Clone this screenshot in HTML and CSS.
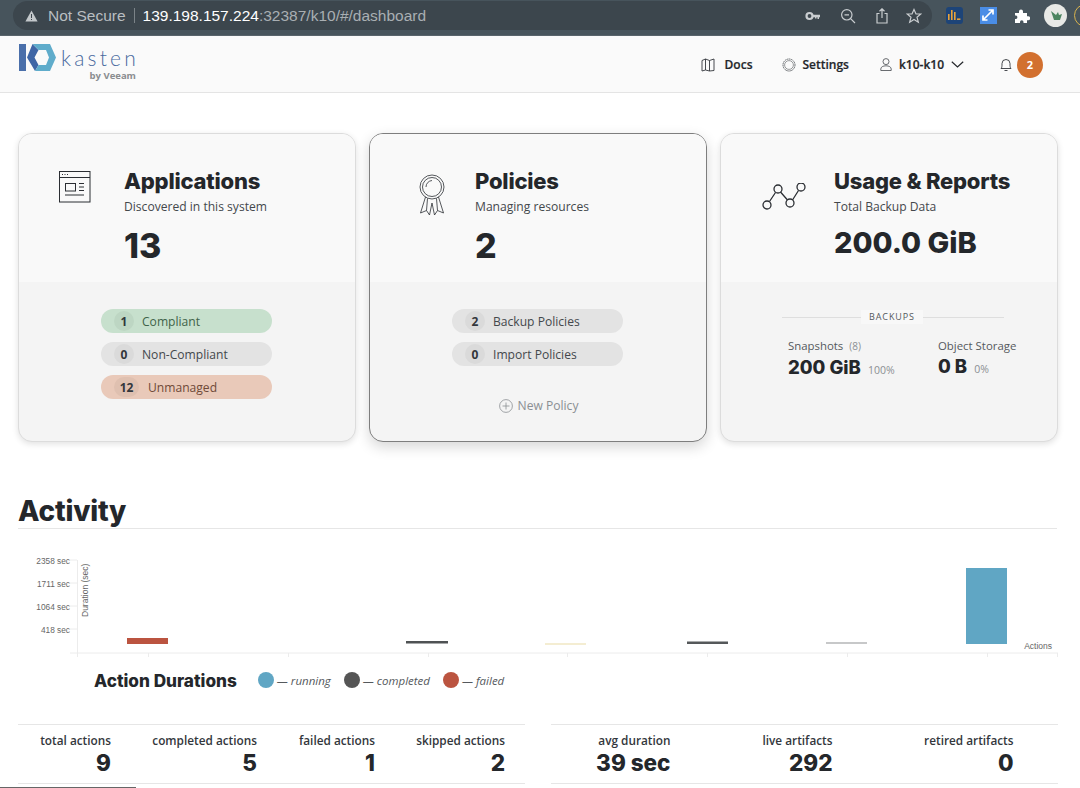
FILE: index.html
```html
<!DOCTYPE html>
<html lang="en">
<head>
<meta charset="utf-8">
<title>K10 Dashboard</title>
<link rel="stylesheet" href="styles.css">
</head>
<body>
<div class="browser">
  <div class="omnibox">
    <svg class="warn" width="13" height="12" viewBox="0 0 13 12"><path d="M6.5 0.5 12.6 11.5H0.4Z" fill="#c3c8cb"/><rect x="6" y="4" width="1" height="4" fill="#3c464d"/><rect x="6" y="9" width="1" height="1" fill="#3c464d"/></svg>
    <span class="secure">Not Secure</span>
    <span class="sep"></span>
    <span class="url"><b>139.198.157.224</b>:32387/k10/#/dashboard</span>
    <span class="grow"></span>
    <svg class="bi" width="16" height="16" viewBox="0 0 16 16"><circle cx="4.5" cy="8" r="3" fill="none" stroke="#c9cdd0" stroke-width="2.2"/><path d="M7 6.8H15V9.2H14V11H12.5V9.2H11.5V10.5H10V9.2H7Z" fill="#c9cdd0"/></svg>
    <svg class="bi roomy" width="16" height="16" viewBox="0 0 16 16" fill="none" stroke="#c9cdd0" stroke-width="1.2"><circle cx="6.8" cy="6.8" r="5.2"/><path d="M10.6 10.6 15 15M4.5 6.8H9"/></svg>
    <svg class="bi roomy" width="14" height="16" viewBox="0 0 14 16" fill="none" stroke="#c9cdd0" stroke-width="1.2"><path d="M4.5 5.5H2V15H12V5.5H9.5M7 10V1M4.5 3.2 7 .8 9.5 3.2"/></svg>
    <svg class="bi" width="16" height="16" viewBox="0 0 16 16" fill="none" stroke="#c9cdd0" stroke-width="1.2"><path d="M8 1.5 10 6H14.8L11 9.2 12.3 14.2 8 11.4 3.7 14.2 5 9.2 1.2 6H6Z"/></svg>
  </div>
  <div class="ext">
    <span class="ext-a"><svg width="16" height="16" viewBox="0 0 16 16"><rect x="2" y="7" width="1.6" height="6" fill="#e8a33a"/><rect x="5" y="3" width="1.6" height="10" fill="#e8a33a"/><rect x="8" y="5" width="1.6" height="8" fill="#e8a33a"/><rect x="11" y="11.4" width="3.4" height="1.6" fill="#e8a33a"/></svg></span>
    <span class="ext-b"><svg width="16" height="16" viewBox="0 0 16 16" fill="none" stroke="#fff" stroke-width="1.7"><path d="M3 13 13 3M8.5 3H13V7.5M3 8.5V13H7.5"/></svg></span>
    <svg class="puzzle" width="16" height="16" viewBox="0 0 16 16"><path d="M1 5H5V3.5A2 2 0 0 1 9 3.5V5H13V8.2H14.2A2 2 0 0 1 14.2 12.2H13V15H9.5V14A1.7 1.7 0 0 0 6 14V15H1V11H2A1.8 1.8 0 0 0 2 7.5H1Z" fill="#fff"/></svg>
    <span class="avatar"><svg width="18" height="18" viewBox="0 0 18 18"><path d="M4 4 7 13H13L15 7 12 8 11 5 9 8Z" fill="#4c8560"/></svg></span>
    <span class="ring"></span>
  </div>
</div>

<header class="topbar">
  <div class="logo">
    <svg width="37" height="27" viewBox="0 0 37 27"><rect x="0" y="0" width="7" height="27" fill="#4a6faa"/><path d="M8 13.500 13.500 0 19.500 6 15.500 13.500 19.500 21 16 27Z" fill="#3f66a6"/><path d="M13.500 0H31L37 13.500 31 27H16L19.500 21H27L30 13.500 27 6H19.500Z" fill="#5faccb"/></svg>
    <div class="logo-text"><span class="kasten">kasten</span><span class="veeam">by Veeam</span></div>
  </div>
  <nav class="nav">
    <a class="nav-item docs"><svg width="14" height="14" viewBox="0 0 14 14" fill="none" stroke="#33373c" stroke-width=".9"><path d="M1 2.5 4.5 1V12L1 13ZM4.5 1 8.5 2.5V13L4.5 12M8.5 2.5 13 1V12.5L8.5 13"/></svg>Docs</a>
    <a class="nav-item settings"><svg width="14" height="14" viewBox="0 0 14 14" fill="none" stroke="#55595d" stroke-width=".9" stroke-dasharray="1.6 .5"><circle cx="7" cy="7" r="6"/><circle cx="7" cy="7" r="4.4" stroke-dasharray="none" stroke-width=".6"/></svg>Settings</a>
    <a class="nav-item user"><svg width="12" height="13" viewBox="0 0 12 13" fill="none" stroke="#44484c" stroke-width=".8"><circle cx="6" cy="3.6" r="3"/><path d="M.8 12.5V11C.8 9 3 7.8 6 7.8S11.2 9 11.2 11V12.5Z"/></svg>k10-k10<svg class="chev" width="13" height="7" viewBox="0 0 13 7" fill="none" stroke="#24272b" stroke-width="1.2"><path d="M.8 .8 6.5 6 12.2 .8"/></svg></a>
    <a class="bell"><svg width="12" height="15" viewBox="0 0 12 15" fill="none" stroke="#33373c" stroke-width=".9"><path d="M1 11.5C2 10.5 2 9 2 6.5A4 4 0 0 1 10 6.5C10 9 10 10.5 11 11.5ZM4.5 13.5H7.5"/></svg><span class="badge">2</span></a>
  </nav>
</header>

<main class="page">
  <section class="cards">
    <article class="card">
      <div class="card-top">
        <div class="card-icon apps"><svg width="32" height="32" viewBox="0 0 32 32" fill="none" stroke="#2b2e33" stroke-width="1"><rect x=".5" y=".5" width="30.5" height="30.5"/><path d="M.5 6.500H31" stroke-width="1"/><path d="M3 3.500H4M5.500 3.500H6.500M8 3.500H9" stroke-width="1"/><rect x="6.500" y="12.500" width="10" height="7.500"/><path d="M20 12.500H25M20 16H25M20 19.500H25M6 24H25"/></svg></div>
        <div class="card-main">
          <h2>Applications</h2>
          <p>Discovered in this system</p>
          <div class="big">13</div>
        </div>
      </div>
      <div class="card-bottom pills">
        <div class="pill green"><span class="num">1</span>Compliant</div>
        <div class="pill"><span class="num">0</span>Non-Compliant</div>
        <div class="pill orange"><span class="num wide">12</span>Unmanaged</div>
      </div>
    </article>

    <article class="card active">
      <div class="card-top">
        <div class="card-icon award"><svg width="26" height="42" viewBox="0 0 26 42" fill="none" stroke="#2b2e33" stroke-width=".8"><circle cx="13" cy="13" r="12"/><circle cx="13" cy="13" r="9.500"/><path d="M7 13A6.500 6.500 0 0 1 13 6.500"/><path d="M6.500 23 1.500 39 7.500 36.500 10.500 41 13 29 15.500 41 18.500 36.500 24.500 39 19.500 23M8.500 24.500 7.500 36.500M17.500 24.500 18.500 36.500"/></svg></div>
        <div class="card-main">
          <h2>Policies</h2>
          <p>Managing resources</p>
          <div class="big">2</div>
        </div>
      </div>
      <div class="card-bottom pills">
        <div class="pill"><span class="num">2</span>Backup Policies</div>
        <div class="pill"><span class="num">0</span>Import Policies</div>
        <div class="new-policy"><svg width="14" height="14" viewBox="0 0 14 14" fill="none" stroke="#8b8f93" stroke-width=".8"><circle cx="7" cy="7" r="6.400"/><path d="M7 3.500V10.500M3.500 7H10.500"/></svg>New Policy</div>
      </div>
    </article>

    <article class="card">
      <div class="card-top">
        <div class="card-icon usage"><svg width="44" height="28" viewBox="0 0 44 28" fill="none" stroke="#2b2e33" stroke-width="1.300"><circle cx="5" cy="22" r="4"/><circle cx="16" cy="6" r="4"/><circle cx="28" cy="20" r="4"/><circle cx="39" cy="4" r="4"/><path d="M7.500 18.500 13.500 9.500M18.500 9 25.500 17M30.500 17 36.500 7.500"/></svg></div>
        <div class="card-main">
          <h2>Usage &amp; Reports</h2>
          <p>Total Backup Data</p>
          <div class="big usage-big">200.0 GiB</div>
        </div>
      </div>
      <div class="card-bottom">
        <div class="divider"><span>BACKUPS</span></div>
        <div class="storage">
          <div class="store">
            <div class="store-label">Snapshots <em>(8)</em></div>
            <div class="store-val">200 GiB <small>100%</small></div>
          </div>
          <div class="store">
            <div class="store-label">Object Storage</div>
            <div class="store-val">0 B <small>0%</small></div>
          </div>
        </div>
      </div>
    </article>
  </section>

  <h1 class="activity">Activity</h1>

  <svg class="chart" width="1040" height="122" viewBox="0 0 1040 122">
    <g class="grid">
      <path d="M59.500 15V108M52 108H1040"/>
      <path d="M52 15H59M52 38H59M52 61H59M52 84H59"/>
      <path d="M59.500 108V112M130.500 108V112M270.500 108V112M410.500 108V112M549.500 108V112M689.500 108V112M829.500 108V112M969.500 108V112M1039.500 108V112"/>
    </g>
    <g class="tick">
      <text x="52" y="19">2358 sec</text>
      <text x="52" y="42">1711 sec</text>
      <text x="52" y="65">1064 sec</text>
      <text x="52" y="88">418 sec</text>
    </g>
    <text class="axis" transform="translate(70 72) rotate(-90)">Duration (sec)</text>
    <text class="axis-x" x="1034" y="104">Actions</text>
    <rect x="109" y="93" width="41" height="6" fill="#bb5440"/>
    <rect x="388" y="96" width="42" height="2.500" fill="#4f5254"/>
    <rect x="527" y="98.500" width="41" height="1" fill="#e9dca6"/>
    <rect x="669" y="96.500" width="41" height="2.500" fill="#55585a"/>
    <rect x="808" y="97.500" width="41" height="1" fill="#8f9193"/>
    <rect x="948" y="23" width="41" height="76" fill="#60a6c4"/>
  </svg>

  <div class="legend">
    <h3>Action Durations</h3>
    <span class="key"><i class="dot running"></i>— running</span>
    <span class="key"><i class="dot completed"></i>— completed</span>
    <span class="key"><i class="dot failed"></i>— failed</span>
  </div>

  <section class="stats">
    <div class="stat-group four">
      <div class="stat"><span>total actions</span><strong>9</strong></div>
      <div class="stat"><span>completed actions</span><strong>5</strong></div>
      <div class="stat"><span>failed actions</span><strong>1</strong></div>
      <div class="stat"><span>skipped actions</span><strong>2</strong></div>
    </div>
    <div class="stat-group three">
      <div class="stat"><span>avg duration</span><strong>39 sec</strong></div>
      <div class="stat"><span>live artifacts</span><strong>292</strong></div>
      <div class="stat"><span>retired artifacts</span><strong>0</strong></div>
    </div>
  </section>
</main>
<div class="status-edge"></div>
</body>
</html>
```
FILE: styles.css
```css
* { box-sizing: border-box; }
html, body { margin: 0; padding: 0; height: 788px; overflow: hidden; background: #fff; }
body { font-family: "Open Sans", sans-serif; color: #24272b; position: relative; }

.browser { height: 36px; background: #47545c; display: flex; align-items: flex-start; padding: 1px 0 0 13px; border-bottom: 1px solid #59646b; overflow: hidden; }
.omnibox { flex: none; width: 919px; height: 29px; background: #3c464d; border-radius: 15px; display: flex; align-items: center; padding: 0 10px 0 12px; }
.warn { margin-right: 10px; }
.secure { font: 15.500px "Liberation Sans", sans-serif; color: #b9bec1; }
.sep { width: 1px; height: 15px; background: #7b8388; margin: 0 8px; }
.url { font: 15.500px "Liberation Sans", sans-serif; color: #a9afb3; }
.url b { font-weight: 400; color: #fff; }
.grow { flex: 1; }
.bi { margin-left: 17px; }
.bi.roomy { margin-left: 19px; }
.ext { flex: none; display: flex; align-items: center; gap: 17px; height: 29px; margin-left: 14px; }
.ext-a { width: 17px; height: 17px; background: #1d4478; border-radius: 3px; display: flex; }
.ext-b { width: 17px; height: 17px; background: #4a8de6; display: flex; }
.avatar { width: 23px; height: 23px; border-radius: 50%; background: #e8e9e6; display: flex; align-items: center; justify-content: center; margin-left: -3px; }
.ring { width: 23px; height: 23px; border-radius: 50%; border: 1px solid #d8b34e; margin-left: -10px; flex: none; }

.topbar { height: 57px; background: #fafafa; border-bottom: 1px solid #e4e4e4; display: flex; justify-content: space-between; padding: 8px 37px 0 19px; }
.logo { display: flex; gap: 5px; align-items: flex-start; }
.logo-text { display: flex; flex-direction: column; align-items: flex-end; margin-top: 2px; }
.kasten { font: 300 21px/24px "Lato", sans-serif; letter-spacing: 3.200px; color: #4a6a9f; margin-right: -3px; }
.veeam { font: 700 9.500px/11px "Open Sans", sans-serif; color: #8a8d90; }
.nav { display: flex; align-items: center; height: 41px; }
.nav-item { display: flex; align-items: center; font-weight: 600; font-size: 12px; color: #24272b; -webkit-text-stroke: .2px #24272b; }
.docs { gap: 10px; margin-right: 30px; }
.settings { gap: 6px; margin-right: 31px; }
.user { gap: 7px; margin-right: 36px; }
.chev { margin-left: 0; }
.bell { display: flex; align-items: center; gap: 5px; }
.badge { width: 26px; height: 26px; border-radius: 50%; background: #d2702f; color: #fff; font-size: 11px; font-weight: 700; display: flex; align-items: center; justify-content: center; }

.page { padding: 40px 22px 0 18px; }
.cards { display: grid; grid-template-columns: repeat(3, 338px); gap: 13px; }
.card { height: 309px; border: 1px solid #dcdcdc; border-radius: 14px; overflow: hidden; box-shadow: 0 2px 6px rgba(0,0,0,.12); display: flex; flex-direction: column; background: #f4f4f4; }
.card.active { border-color: #7e7e7e; box-shadow: 0 5px 14px rgba(0,0,0,.16); }
.card-top { height: 148px; background: #f9f9f9; display: flex; padding-top: 34px; }
.card-icon { flex: none; }
.card-icon.apps { width: 105px; padding: 3px 0 0 40px; }
.card-icon.award { width: 105px; padding: 6px 0 0 49px; }
.card-icon.usage { width: 113px; padding: 15px 0 0 41px; }
h2 { margin: 0; font: 800 22px/26px "Inter", sans-serif; color: #24272b; letter-spacing: -.2px; }
.card-main p { margin: 0; font-size: 12.100px; line-height: 26px; color: #44484c; height: 22px; }
.big { font: 800 34px/44px "Inter", sans-serif; margin-top: 8px; color: #24272b; }
.usage-big { font-size: 29px; margin-top: 5px; }
.card-bottom { flex: 1; }
.pills { display: flex; flex-direction: column; align-items: center; padding: 27px 1px 0 0; gap: 9px; }
.pill { width: 171px; height: 24px; border-radius: 12px; background: #e3e3e3; display: flex; align-items: center; padding-left: 13px; font-size: 12.100px; color: #44484c; }
.pill .num { width: 20px; height: 20px; border-radius: 50%; background: #dadada; font-weight: 700; color: #33373c; display: flex; align-items: center; justify-content: center; margin-right: 8px; font-size: 12px; flex: none; }
.pill .num.wide { width: 25px; border-radius: 10px; margin-right: 9px; }
.pill.green { background: #c7e0cd; color: #3f6349; }
.pill.green .num { background: #bdd6c3; }
.pill.orange { background: #e9c9b9; color: #6f4a38; }
.pill.orange .num { background: #dfc0b0; }
.new-policy { display: flex; align-items: center; gap: 5px; font-size: 12.100px; color: #8b8f93; margin-top: 22px; padding-left: 2px; }
.divider { margin: 28px 0 0 61px; width: 222px; height: 14px; position: relative; display: flex; justify-content: center; background: linear-gradient(#dedede,#dedede) center/100% 1px no-repeat; }
.divider span { background: #f8f8f8; font-size: 9px; letter-spacing: .9px; color: #55595d; padding: 0 8px; line-height: 14px; margin-left: -2px; }
.storage { display: flex; margin: 13px 0 0 67px; }
.store:first-child { width: 150px; }
.store-label { font-size: 11.400px; line-height: 17px; color: #55595d; margin-bottom: 1px; }
.store-label em { font-style: normal; font-size: 10px; color: #8b8f93; margin-left: 3px; }
.store-val { font: 800 18.500px/22px "Inter", sans-serif; color: #24272b; }
.store-val small { font: 400 10.500px "Open Sans", sans-serif; color: #8b8f93; margin-left: 3px; }

.activity { margin: 52px 0 0; font: 800 28px/35px "Inter", sans-serif; height: 35px; border-bottom: 1px solid #e6e6e6; width: 1039px; color: #24272b; letter-spacing: -.2px; }
.chart { display: block; margin-top: 16px; }
.chart path { fill: none; }
.grid path { stroke: #ececec; stroke-width: 1; }
.tick text { font: 8.300px "Liberation Sans", sans-serif; fill: #666; text-anchor: end; }
.axis { font: 8.500px "Liberation Sans", sans-serif; fill: #666; }
.axis-x { font: 8.500px "Liberation Sans", sans-serif; fill: #666; text-anchor: end; }

.legend { display: flex; align-items: center; margin: 0 0 0 76px; height: 26px; }
.legend h3 { margin: 0 21px 0 0; font: 800 17.200px "Inter", sans-serif; color: #24272b; }
.key { display: flex; align-items: center; gap: 3px; font-style: italic; font-size: 11.500px; color: #55595d; margin-right: 13px; }
.dot { width: 16px; height: 16px; border-radius: 50%; display: block; }
.dot.running { background: #60a6c4; }
.dot.completed { background: #555; }
.dot.failed { background: #bb5440; }

.stats { display: flex; gap: 26px; margin-top: 31px; }
.stat-group { height: 60px; border-top: 1px solid #e6e6e6; border-bottom: 1px solid #e6e6e6; display: grid; }
.four { width: 507px; grid-template-columns: 93px 146px 118px 130px; }
.three { width: 508px; grid-template-columns: 120px 162px 181px; }
.stat { display: flex; flex-direction: column; align-items: flex-end; padding-top: 7px; }
.stat span { font-size: 11.800px; font-weight: 600; line-height: 16px; color: #33373c; }
.stat strong { font: 800 22.500px/30px "Inter", sans-serif; color: #24272b; }

.status-edge { position: absolute; left: 0; bottom: 0; width: 136px; height: 1px; background: #666; }
```
